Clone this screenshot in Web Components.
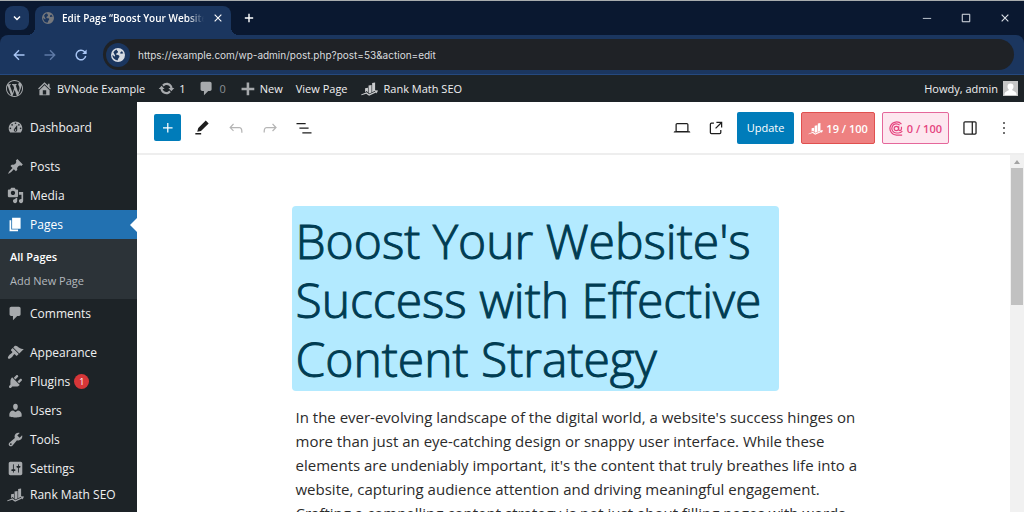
<!DOCTYPE html>
<html lang="en">
<head>
<meta charset="utf-8">
<meta name="viewport" content="width=device-width, initial-scale=1">
<title>Edit Page "Boost Your Website's Success"</title>
<style>
  html, body { height: 100%; }
  body {
    margin: 0;
    overflow: hidden;
    font-family: "Open Sans", "Noto Sans", sans-serif;
    font-size: 12px;
    color: #1e1e1e;
  }
</style>
</head>
<body>
<edit-page-app></edit-page-app>

<script>
const ICONS = {
  // 20px admin icons
  wordpress: ['0 0 20 20', '<path d="M20 10c0-5.51-4.49-10-10-10C4.48 0 0 4.49 0 10c0 5.52 4.48 10 10 10 5.51 0 10-4.48 10-10zM7.78 15.37L4.37 6.22c.55-.02 1.17-.08 1.17-.08.5-.06.44-1.13-.06-1.11 0 0-1.45.11-2.37.11-.18 0-.37 0-.58-.01C4.12 2.69 6.87 1.11 10 1.11c2.33 0 4.45.87 6.05 2.34-.68-.11-1.65.39-1.65 1.58 0 .74.45 1.36.9 2.1.35.61.55 1.36.55 2.46 0 1.49-1.4 5-1.4 5l-3.03-8.37c.54-.02.82-.17.82-.17.5-.05.44-1.25-.06-1.22 0 0-1.44.12-2.38.12-.87 0-2.33-.12-2.33-.12-.5-.03-.56 1.2-.06 1.22l.92.08 1.26 3.41zM17.41 10c.24-.64.74-1.87.43-4.25.7 1.29 1.05 2.71 1.05 4.25 0 3.29-1.73 6.24-4.4 7.78.97-2.59 1.94-5.2 2.92-7.78zM6.1 18.09C3.12 16.65 1.11 13.53 1.11 10c0-1.3.23-2.48.72-3.59C3.25 10.3 4.67 14.2 6.1 18.09zm4.03-6.63l2.58 6.98c-.86.29-1.76.45-2.71.45-.79 0-1.57-.11-2.29-.33.81-2.38 1.62-4.74 2.42-7.1z"/>'],
  home: ['0 0 20 20', '<path d="M16 8.5l1.53 1.53-1.06 1.06L10 4.6l-6.47 6.49-1.06-1.06L10 2.5l4 4v-2h2v4zm-6-2.46l6 5.99V18H4v-5.97zM12 17v-5H8v5h4z"/>'],
  update: ['0 0 20 20', '<path d="M10.2 3.28c3.53 0 6.43 2.61 6.92 6h2.08l-3.5 4-3.5-4h2.32c-.45-1.97-2.21-3.45-4.32-3.45-1.45 0-2.73.71-3.54 1.78L4.95 5.66C6.23 4.2 8.11 3.28 10.2 3.28zm-.4 13.44c-3.52 0-6.43-2.61-6.92-6H.8l3.5-4c1.17 1.33 2.33 2.67 3.5 4H5.48c.45 1.97 2.21 3.45 4.32 3.45 1.45 0 2.73-.71 3.54-1.78l1.71 1.95c-1.28 1.46-3.15 2.38-5.25 2.38z"/>'],
  comments: ['0 0 20 20', '<path d="M5 2h9c1.1 0 2 .9 2 2v7c0 1.1-.9 2-2 2h-2l-5 5v-5H5c-1.1 0-2-.9-2-2V4c0-1.1.9-2 2-2z"/>'],
  plus: ['0 0 20 20', '<path d="M18 9v3h-6v6H9v-6H3V9h6V3h3v6h6z"/>'],
  dashboard: ['0 0 20 20', '<path fill-rule="evenodd" d="M3.76 16h12.48c1.1-1.37 1.76-3.11 1.76-5 0-4.42-3.58-8-8-8s-8 3.58-8 8c0 1.89.66 3.63 1.76 5zM10 4c.55 0 1 .45 1 1s-.45 1-1 1-1-.45-1-1 .45-1 1-1zM6 6c.55 0 1 .45 1 1s-.45 1-1 1-1-.45-1-1 .45-1 1-1zm8 0c.55 0 1 .45 1 1s-.45 1-1 1-1-.45-1-1 .45-1 1-1zm-5.37 5.55L12 7v6c0 1.1-.9 2-2 2s-2-.9-2-2c0-.57.24-1.08.63-1.45zM4 10c.55 0 1 .45 1 1s-.45 1-1 1-1-.45-1-1 .45-1 1-1zm12 0c.55 0 1 .45 1 1s-.45 1-1 1-1-.45-1-1 .45-1 1-1zm-5 3c0-.55-.45-1-1-1s-1 .45-1 1 .45 1 1 1 1-.45 1-1z"/>'],
  pin: ['0 0 20 20', '<path d="M10.44 3.02l1.82-1.82 6.36 6.35-1.83 1.82c-1.05-.68-2.48-.57-3.41.36l-.75.75c-.92.93-1.04 2.35-.35 3.41l-1.83 1.82-2.41-2.41-2.8 2.79c-.42.42-3.38 2.71-3.8 2.29s1.86-3.39 2.28-3.81l2.79-2.79L4.1 9.36l1.83-1.82c1.05.69 2.48.57 3.4-.36l.75-.75c.93-.92 1.05-2.35.36-3.41z"/>'],
  media: ['0 0 20 20', '<path fill-rule="evenodd" d="M13 11V4c0-.55-.45-1-1-1h-1.67L9 1H5L3.67 3H2c-.55 0-1 .45-1 1v7c0 .55.45 1 1 1h10c.55 0 1-.45 1-1zM7 4.5c1.38 0 2.5 1.12 2.5 2.5S8.38 9.5 7 9.5 4.5 8.38 4.5 7 5.62 4.5 7 4.5zM14 6h5v10.5c0 1.38-1.12 2.5-2.5 2.5S14 17.88 14 16.5s1.12-2.5 2.5-2.5c.17 0 .34.02.5.05V9h-3V6zm-4 8.05V13h2v3.5c0 1.38-1.12 2.5-2.5 2.5S7 17.88 7 16.5 8.12 14 9.5 14c.17 0 .34.02.5.05z"/>'],
  page: ['0 0 20 20', '<path d="M6 15V2h10v13H6zm-1 1h8v2H3V5h2v11z"/>'],
  appearance: ['0 0 20 20', '<path d="M14.48 11.06L7.41 3.99l1.5-1.5c.5-.56 2.3-.47 3.51.32 1.21.8 1.43 1.28 2.91 2.1 1.18.64 2.45 1.26 4.45.85zm-.71.71L6.7 4.7 4.93 6.47c-.39.39-.39 1.02 0 1.41l1.06 1.06c.39.39.39 1.03 0 1.42-.6.6-1.43 1.11-2.21 1.69-.35.26-.7.53-1.01.84C1.43 14.23.4 16.08 1.4 17.07c.99 1 2.84-.03 4.18-1.36.31-.31.58-.66.85-1.02.57-.78 1.08-1.61 1.69-2.21.39-.39 1.02-.39 1.41 0l1.06 1.06c.39.39 1.02.39 1.41 0z"/>'],
  plugins: ['0 0 20 20', '<path d="M13.11 4.36L9.87 7.6 8 5.73l3.24-3.24c.35-.34 1.05-.2 1.56.32.52.51.66 1.21.31 1.55zm-8 1.77l.91-1.12 9.01 9.01-1.19.84c-.71.71-2.63 1.16-3.82 1.16H6.14L4.9 17.26c-.59.59-1.54.59-2.12 0-.59-.58-.59-1.53 0-2.12l1.24-1.24v-3.88c0-1.13.4-3.19 1.09-3.89zm7.26 3.97l3.24-3.24c.34-.35 1.04-.21 1.55.31.52.51.66 1.21.31 1.55l-3.24 3.25z"/>'],
  users: ['0 0 20 20', '<path d="M10 9.25c-2.27 0-2.73-3.44-2.73-3.44C7 4.02 7.82 2 9.97 2c2.16 0 2.98 2.02 2.71 3.81 0 0-.41 3.44-2.68 3.44zm0 2.57L12.72 10c2.39 0 4.52 2.33 4.52 4.53v2.49s-3.65 1.13-7.24 1.13c-3.65 0-7.24-1.13-7.24-1.13v-2.49c0-2.25 1.94-4.48 4.47-4.48z"/>'],
  tools: ['0 0 20 20', '<path fill-rule="evenodd" d="M16.68 9.77c-1.34 1.34-3.3 1.67-4.95.99l-5.41 6.52c-.99.99-2.59.99-3.58 0s-.99-2.59 0-3.57l6.52-5.42c-.68-1.65-.35-3.61.99-4.95 1.28-1.28 3.12-1.62 4.72-1.06l-2.89 2.89 2.82 2.82 2.86-2.87c.53 1.58.18 3.39-1.08 4.65zM3.81 16.21c.4.39 1.04.39 1.43 0 .4-.4.4-1.04 0-1.43-.39-.4-1.03-.4-1.43 0-.39.39-.39 1.03 0 1.43z"/>'],
  settings: ['0 0 20 20', '<path fill-rule="evenodd" d="M18 16V4c0-1.1-.9-2-2-2H4c-1.1 0-2 .9-2 2v12c0 1.1.9 2 2 2h12c1.1 0 2-.9 2-2zM8 11h1c.55 0 1 .45 1 1s-.45 1-1 1H8v1.5c0 .28-.22.5-.5.5s-.5-.22-.5-.5V13H6c-.55 0-1-.45-1-1s.45-1 1-1h1V5.5c0-.28.22-.5.5-.5s.5.22.5.5V11zm5-2h-1c-.55 0-1-.45-1-1s.45-1 1-1h1V5.5c0-.28.22-.5.5-.5s.5.22.5.5V7h1c.55 0 1 .45 1 1s-.45 1-1 1h-1v5.5c0 .28-.22.5-.5.5s-.5-.22-.5-.5V9z"/>'],
  rank: ['0 0 20 20', '<path d="M4.8 9.6l3.4-.6v5.6L6.6 13l-1.8 1.4zM8.9 6.4l3.5-.6v9L10 15.8l-1.1-.8zM13.1 3.4l3.5-.6v9.8l-3.500 1.900z"/><path d="M.2 17.200l6.300-2.900 3.200 2.400 7.100-3.300-.6-1.200 3.800.2-1.600 3.500-.7-1.200-8.200 3.700-3.400-2.300-5.600 1.700z"/>'],
  // 24px editor icons
  insert: ['0 0 24 24', '<path d="M11 12.5V17.5H12.5V12.5H17.5V11H12.5V6H11V11H6V12.5H11Z"/>'],
  pencil: ['0 0 24 24', '<path d="m20 6.5-3.5-3.5-9 9-1.200 4.500 4.500-1L20 6.500ZM11 18H4v1.800h7V18Z"/>'],
  undo: ['0 0 24 24', '<path d="M18.3 11.7c-.6-.6-1.4-.9-2.3-.9H6.7l2.9-3.3-1.1-1-4.5 5L8.5 16l1-1-2.7-2.7H16c.5 0 .9.2 1.3.5 1 1 1 3.4 1 4.5v.3h1.5v-.2c0-1.5 0-4.3-1.5-5.7z"/>'],
  redo: ['0 0 24 24', '<path d="M15.6 6.5l-1.1 1 2.9 3.3H8c-.9 0-1.7.3-2.3.9-1.4 1.5-1.4 4.2-1.4 5.6v.2h1.5v-.3c0-1.1 0-3.5 1-4.5.3-.3.7-.5 1.3-.5h9.2L14.5 15l1.1 1.1 4.6-4.6-4.6-5z"/>'],
  outline: ['0 0 24 24', '<path d="M3 6h11v1.5H3V6Zm3.500 5.500h11V13h-11v-1.500ZM21 17H10v1.500h11V17Z"/>'],
  laptop: ['0 0 24 24', '<path fill-rule="evenodd" d="M20.5 16h-.7V8c0-1.1-.9-2-2-2H6.2c-1.1 0-2 .9-2 2v8h-.7c-.8 0-1.5.7-1.5 1.5h20c0-.8-.7-1.5-1.5-1.5zM5.7 8c0-.3.2-.5.5-.5h11.6c.3 0 .5.2.5.5v7.6H5.7V8z"/>'],
  external: ['0 0 24 24', '<path d="M19.5 4.5h-7V6h4.44l-5.97 5.97 1.06 1.06L18 7.06v4.44h1.5v-7Zm-13 1a2 2 0 0 0-2 2v10a2 2 0 0 0 2 2h10a2 2 0 0 0 2-2v-3H17v3a.5.5 0 0 1-.5.5h-10a.5.5 0 0 1-.5-.5v-10a.5.5 0 0 1 .5-.5h3V5.5h-3Z"/>'],
  drawer: ['0 0 24 24', '<path fill-rule="evenodd" d="M18 4H6c-1.1 0-2 .9-2 2v12c0 1.1.9 2 2 2h12c1.1 0 2-.9 2-2V6c0-1.1-.9-2-2-2zm-4 14.5H6c-.3 0-.5-.2-.5-.5V6c0-.3.2-.5.5-.5h8v13zm4.5-.5c0 .3-.2.5-.5.5h-2.5v-13H18c.3 0 .5.2.5.5v12z"/>'],
  more: ['0 0 24 24', '<path d="M13 19h-2v-2h2v2zm0-6h-2v-2h2v2zm0-6h-2V5h2v2z"/>'],
  target: ['0 0 20 20', '<g fill="none" stroke="currentColor" stroke-width="1.6"><path d="M16.600 4.300A8.700 8.700 0 1 0 10 18.700h7.500"/><path d="M17.800 13.500A8.700 8.700 0 0 1 12.500 16H10A6.100 6.100 0 1 1 14.200 5.600"/><circle cx="9.800" cy="10" r="2.900"/><path d="M12.900 6.900v4.300c0 2.200 3.700 2.200 3.700-.8V7.600"/></g>'],
  // window controls
  chevron: ['0 0 12 12', '<path d="M3 4.5l3 3 3-3" fill="none" stroke="currentColor" stroke-width="1.5"/>'],
  close: ['0 0 12 12', '<path d="M2 2l8 8M10 2l-8 8" fill="none" stroke="currentColor" stroke-width="1.3"/>'],
  add: ['0 0 12 12', '<path d="M6 1v10M1 6h10" fill="none" stroke="currentColor" stroke-width="1.7"/>'],
  minimize: ['0 0 12 12', '<path d="M1 6.5h10" stroke="currentColor"/>'],
  maximize: ['0 0 12 12', '<path d="M1.5 1.5h9v9h-9z" fill="none" stroke="currentColor" stroke-width="1.2"/>'],
  back: ['0 0 12 12', '<path d="M11.5 6H1.5M6 1.3L1.3 6 6 10.7" fill="none" stroke="currentColor" stroke-width="1.4"/>'],
  forward: ['0 0 12 12', '<path d="M.5 6h10M6 1.3L10.7 6 6 10.7" fill="none" stroke="currentColor" stroke-width="1.4"/>'],
  reload: ['0 0 12 12', '<path d="M10.7 7A4.8 4.8 0 1 1 9.6 2.8L11 4.3" fill="none" stroke="currentColor" stroke-width="1.4"/><path d="M11.6.6v4.4H7.2z"/>'],
  globe: ['0 0 20 20', '<path fill-rule="evenodd" d="M10 0a10 10 0 1 0 0 20 10 10 0 0 0 0-20zM8.5 2.2c-.5 2 1.8 1.6 1.5 3.6-.3 1.7-2.6 1.4-2.6 3.2 0 1.4 2.2.9 3.6 1.5 1.5.7 1.2 2.5.1 3.4-.8.7-.9 2.4-1.9 3.9A8 8 0 0 1 2 9.6l2.6 2.3c1 .7 1.7-.3 1-1.4L3.4 6.2A8 8 0 0 1 8.5 2.2zM17.6 8.1c-1.5-.7-3 .6-4.1-.3-1-.9.6-2.9 2.2-3.2a8 8 0 0 1 1.9 3.5z"/>'],
  avatar: ['0 0 15 15', '<path fill="#c6c6c6" d="M0 0h15v15H0z"/><path fill="#fff" d="M7.5 2.5c2 0 3 1.3 3 3.1 0 1.5-.7 2.5-1.4 3.1.2 1.2 3.9 1.2 4.4 4.3v1H1.5v-1c.5-3.1 4.2-3.1 4.4-4.3-.7-.6-1.4-1.6-1.4-3.1 0-1.8 1-3.1 3-3.1z"/>']
};

class UiIcon extends HTMLElement {
  constructor() {
    super();
    this.attachShadow({ mode: 'open' });
  }

  connectedCallback() {
    const [box, shapes] = ICONS[this.getAttribute('name')];
    this.shadowRoot.innerHTML = /* html */ `
    <style>
      :host { display: block; flex: none; width: 17px; height: 17px; }
      svg { display: block; width: 100%; height: 100%; }
    </style>
    <svg viewBox="${box}" fill="currentColor" aria-hidden="true">${shapes}</svg>`;
  }
}

class BrowserTabs extends HTMLElement {
  constructor() {
    super();
    this.attachShadow({ mode: 'open' });
  }

  static get styles() {
    return /* css */`
    :host {
      display: flex;
      align-items: flex-end;
      height: 34px;
      border-top: 1px solid #a9adae;
      background: #0a1830;
      color: #fff;
    }

    button {
      display: grid;
      place-items: center;
      padding: 0;
      border: 0;
      background: none;
      color: inherit;
    }

    ui-icon { width: 12px; height: 12px; }

    .search {
      width: 24px;
      height: 24px;
      margin: 0 -2px 5px 5px;
      border-radius: 8px;
      background: #1b365f;
    }

    .tab {
      display: flex;
      align-items: flex-end;
    }

    .tab::before, .tab::after {
      content: "";
      width: 8px;
      height: 8px;
      background: radial-gradient(circle at 0 0, transparent 8px, #1b365f 8px);
    }

    .tab::after {
      background: radial-gradient(circle at 100% 0, transparent 8px, #1b365f 8px);
    }

    .tab-body {
      display: flex;
      align-items: center;
      width: 196px;
      height: 29px;
      box-sizing: border-box;
      padding: 2px 7px 8px;
      border-radius: 8px 8px 0 0;
      background: #1b365f;
    }

    .tab-body > ui-icon { color: #76787c; }

    .title {
      flex: 1;
      min-width: 0;
      margin: 0 8px;
      overflow: hidden;
      white-space: nowrap;
      font-size: 10px;
      font-weight: 600;
      mask-image: linear-gradient(90deg, #000 88%, transparent);
    }

    .tab-body button ui-icon { width: 10px; height: 10px; }
    .tab-body button { width: 12px; height: 16px; }
    .new { width: 20px; height: 34px; }
    .new ui-icon { width: 10px; height: 10px; }

    .controls {
      display: flex;
      margin-left: auto;
      color: #dfe3ea;
    }

    .controls button { width: 39px; height: 34px; }
    .controls ui-icon { width: 10px; height: 10px; }
  `;
  }

  connectedCallback() {
    this.shadowRoot.innerHTML = /* html */ `
    <style>${BrowserTabs.styles}</style>
    <button class="search" aria-label="Search tabs"><ui-icon name="chevron"></ui-icon></button>
    <div class="tab">
      <div class="tab-body">
        <ui-icon name="globe"></ui-icon>
        <span class="title"><slot></slot></span>
        <button aria-label="Close tab"><ui-icon name="close"></ui-icon></button>
      </div>
    </div>
    <button class="new" aria-label="New tab"><ui-icon name="add"></ui-icon></button>
    <div class="controls">
      <button aria-label="Minimize"><ui-icon name="minimize"></ui-icon></button>
      <button aria-label="Maximize"><ui-icon name="maximize"></ui-icon></button>
      <button aria-label="Close"><ui-icon name="close"></ui-icon></button>
    </div>`;
  }
}

class BrowserToolbar extends HTMLElement {
  constructor() {
    super();
    this.attachShadow({ mode: 'open' });
  }

  static get styles() {
    return /* css */`
    :host {
      display: block;
      background: #0a1830;
    }

    .bar {
      display: flex;
      align-items: center;
      height: 39px;
      padding: 0 10px;
      border-bottom: 1px solid #25497f;
      border-radius: 8px 8px 0 0;
      background: #1b365f;
    }

    button {
      display: grid;
      place-items: center;
      width: 31px;
      height: 30px;
      padding: 0;
      border: 0;
      background: none;
      color: #a9c6f5;
    }

    button ui-icon { width: 12px; height: 12px; }
    button:first-child { width: 18px; margin-right: 6px; }
    button[disabled] { color: #5f7aa6; }

    .address {
      display: flex;
      flex: 1;
      align-items: center;
      height: 31px;
      margin-left: 7px;
      border-radius: 16px;
      background: #1f2226;
    }

    .site {
      display: grid;
      place-items: center;
      width: 24px;
      height: 24px;
      margin: 0 8px 0 3px;
      border-radius: 50%;
      background: #1b365f;
      color: #d5dae2;
    }

    .site ui-icon { width: 14px; height: 14px; }

    input {
      flex: 1;
      min-width: 0;
      padding: 0;
      border: 0;
      outline: 0;
      background: none;
      color: #dadcdf;
      font: 10px/20px Inter, Roboto, sans-serif;
    }
  `;
  }

  connectedCallback() {
    this.shadowRoot.innerHTML = /* html */ `
    <style>${BrowserToolbar.styles}</style>
    <div class="bar">
      <button aria-label="Back"><ui-icon name="back"></ui-icon></button>
      <button aria-label="Forward" disabled><ui-icon name="forward"></ui-icon></button>
      <button aria-label="Reload"><ui-icon name="reload"></ui-icon></button>
      <div class="address">
        <span class="site"><ui-icon name="globe"></ui-icon></span>
        <input type="text" aria-label="Address" value="${this.getAttribute('url')}">
      </div>
    </div>`;
  }
}

class BarItem extends HTMLElement {
  constructor() {
    super();
    this.attachShadow({ mode: 'open' });
  }

  connectedCallback() {
    const icon = this.getAttribute('icon');
    const label = this.getAttribute('label');
    this.shadowRoot.innerHTML = /* html */ `
    <style>
      :host { display: block; }
      a {
        display: flex;
        align-items: center;
        gap: 4px;
        color: inherit;
        text-decoration: none;
        white-space: nowrap;
      }
      ui-icon { color: #a7aaad; }
      :host([icon="rank"]) a { gap: 6px; }
      :host([icon="rank"]) ui-icon { color: #c9cbcd; }
      :host([muted]) { color: #8b8f94; }
    </style>
    <a href="#"${label ? ` aria-label="${label}"` : ''}>${icon ? `<ui-icon name="${icon}"></ui-icon>` : ''}<slot></slot></a>`;
  }
}

class AdminBar extends HTMLElement {
  constructor() {
    super();
    this.attachShadow({ mode: 'open' });
  }

  connectedCallback() {
    this.shadowRoot.innerHTML = /* html */ `
    <style>
      :host {
        display: flex;
        align-items: center;
        gap: 13px;
        height: 27px;
        padding: 0 6px;
        background: #1d2327;
        color: #f0f0f1;
        font-size: 11px;
      }
      .account {
        display: flex;
        align-items: center;
        gap: 5px;
        margin-left: auto;
      }
      .account ui-icon { width: 15px; height: 15px; }
    </style>
    <slot></slot>
    <div class="account"><slot name="account"></slot><ui-icon name="avatar"></ui-icon></div>`;
  }
}

class MenuItem extends HTMLElement {
  constructor() {
    super();
    this.attachShadow({ mode: 'open' });
  }

  static get styles() {
    return /* css */`
    :host {
      display: block;
      color: #f0f0f1;
    }

    a {
      display: flex;
      align-items: center;
      gap: 6px;
      height: 29px;
      padding-left: 7px;
      color: inherit;
      text-decoration: none;
    }

    ui-icon { color: #a7aaad; }

    :host([gap]) { margin-top: 10px; }
    :host([short]) a { height: 22px; }

    :host([current]) a {
      background: #2271b1;
      color: #fff;
    }

    :host([current]) ui-icon { color: #fff; }

    /* notch that points at the content area */
    :host([current]) a::after {
      content: "";
      margin-left: auto;
      border: 7px solid transparent;
      border-left: 0;
      border-right-color: #fff;
    }

    .count {
      min-width: 15px;
      margin-left: -2px;
      border-radius: 8px;
      background: #d63638;
      color: #fff;
      font-size: 9px;
      line-height: 15px;
      text-align: center;
    }
  `;
  }

  connectedCallback() {
    const count = this.getAttribute('count');
    this.shadowRoot.innerHTML = /* html */ `
    <style>${MenuItem.styles}</style>
    <a href="#"><ui-icon name="${this.getAttribute('icon')}"></ui-icon><slot></slot>${count ? `<span class="count">${count}</span>` : ''}</a>
    <slot name="submenu"></slot>`;
  }
}

class SubMenu extends HTMLElement {
  constructor() {
    super();
    this.attachShadow({ mode: 'open' });
  }

  connectedCallback() {
    this.shadowRoot.innerHTML = /* html */ `
    <style>
      :host {
        display: block;
        padding: 6px 10px;
        background: #2c3338;
        font-size: 11px;
        line-height: 24px;
      }
      ::slotted(a) {
        display: block;
        color: #b4b9be;
        text-decoration: none;
      }
      ::slotted(a[aria-current]) {
        color: #fff;
        font-weight: 600;
      }
    </style>
    <slot></slot>`;
  }
}

class AdminMenu extends HTMLElement {
  constructor() {
    super();
    this.attachShadow({ mode: 'open' });
  }

  connectedCallback() {
    this.shadowRoot.innerHTML = /* html */ `
    <style>
      :host {
        display: block;
        box-sizing: border-box;
        padding-top: 11px;
        overflow: hidden;
        background: #1d2327;
      }
    </style>
    <nav aria-label="Main menu"><slot></slot></nav>`;
  }
}

class EditorHeader extends HTMLElement {
  constructor() {
    super();
    this.attachShadow({ mode: 'open' });
  }

  static get styles() {
    return /* css */`
    :host {
      display: flex;
      align-items: center;
      justify-content: space-between;
      height: 51px;
      padding: 0 7px 0 17px;
      border-bottom: 2px solid #eee;
      background: #fff;
    }

    .group {
      display: flex;
      align-items: center;
      gap: 7px;
    }

    button {
      display: flex;
      align-items: center;
      justify-content: center;
      gap: 3px;
      width: 27px;
      height: 27px;
      padding: 0;
      border: 0;
      border-radius: 2px;
      background: none;
      color: #1e1e1e;
      font: inherit;
      font-size: 11px;
    }

    button ui-icon { width: 20px; height: 20px; }
    button:disabled { color: #b5b5b5; }

    .insert, .update {
      background: #007cba;
      color: #fff;
    }

    .update, .score {
      width: auto;
      height: 32px;
    }

    .update { padding: 0 10px; }

    .score {
      padding: 2px 6px 0;
      border: 1px solid #e0504f;
      background: #ee8181;
      color: #fff;
      font-weight: 600;
    }

    .score.ai {
      border-color: #e5679b;
      background: #fde7ef;
      color: #e5457f;
    }

    .score ui-icon { width: 15px; height: 15px; }
  `;
  }

  connectedCallback() {
    this.shadowRoot.innerHTML = /* html */ `
    <style>${EditorHeader.styles}</style>
    <div class="group">
      <button class="insert" aria-label="Add block"><ui-icon name="insert"></ui-icon></button>
      <button aria-label="Tools"><ui-icon name="pencil"></ui-icon></button>
      <button aria-label="Undo" disabled><ui-icon name="undo"></ui-icon></button>
      <button aria-label="Redo" disabled><ui-icon name="redo"></ui-icon></button>
      <button aria-label="Document overview"><ui-icon name="outline"></ui-icon></button>
    </div>
    <div class="group">
      <button aria-label="Preview"><ui-icon name="laptop"></ui-icon></button>
      <button aria-label="View page"><ui-icon name="external"></ui-icon></button>
      <button class="update">Update</button>
      <button class="score"><ui-icon name="rank"></ui-icon>19 / 100</button>
      <button class="score ai"><ui-icon name="target"></ui-icon>0 / 100</button>
      <button aria-label="Settings"><ui-icon name="drawer"></ui-icon></button>
      <button aria-label="Options"><ui-icon name="more"></ui-icon></button>
    </div>`;
  }
}

class EditorCanvas extends HTMLElement {
  constructor() {
    super();
    this.attachShadow({ mode: 'open' });
  }

  static get styles() {
    return /* css */`
    :host {
      display: flex;
      min-height: 0;
      overflow: hidden;
      background: #fff;
    }

    .page {
      flex: 1;
      padding: 51px 16px 0 28px;
    }

    article {
      max-width: 568px;
      margin: 0 auto;
    }

    ::slotted(h1) {
      max-width: 479px;
      margin: 0 -4px;
      padding: 5px 4px 3px;
      border-radius: 4px;
      background: #b3eaff;
      color: #003c52;
      font-size: 48px;
      font-weight: 300;
      font-variant-ligatures: none;
      line-height: 59px;
      -webkit-text-stroke: 1px #003c52;
    }

    ::slotted(p) {
      margin: 14px 0 0;
      color: #2b2b2b;
      font-size: 15px;
      line-height: 24px;
    }

    .scrollbar {
      display: flex;
      flex-direction: column;
      gap: 4px;
      width: 12px;
      padding: 5px 1px 0;
      background: #f1f1f1;
    }

    .arrow {
      align-self: center;
      border: 3px solid transparent;
      border-top: 0;
      border-bottom: 4px solid #a3a3a3;
    }

    .thumb {
      height: 39%;
      background: #c1c1c1;
    }
  `;
  }

  connectedCallback() {
    this.shadowRoot.innerHTML = /* html */ `
    <style>${EditorCanvas.styles}</style>
    <div class="page"><article><slot></slot></article></div>
    <div class="scrollbar" aria-hidden="true">
      <span class="arrow"></span>
      <span class="thumb"></span>
    </div>`;
  }
}

class EditPageApp extends HTMLElement {
  constructor() {
    super();
    this.attachShadow({ mode: 'open' });
  }

  static get styles() {
    return /* css */`
    :host {
      display: grid;
      grid-template-rows: auto auto auto minmax(0, 1fr);
      height: 100vh;
    }

    .workspace {
      display: grid;
      grid-template-columns: 137px minmax(0, 1fr);
    }

    main {
      display: grid;
      grid-template-rows: auto minmax(0, 1fr);
      min-height: 0;
    }
  `;
  }

  connectedCallback() {
    this.shadowRoot.innerHTML = /* html */ `
    <style>${EditPageApp.styles}</style>
    <browser-tabs>Edit Page “Boost Your Website's</browser-tabs>
    <browser-toolbar url="https://example.com/wp-admin/post.php?post=53&amp;action=edit"></browser-toolbar>
    <admin-bar>
      <bar-item icon="wordpress" label="About WordPress"></bar-item>
      <bar-item icon="home">BVNode Example</bar-item>
      <bar-item icon="update">1</bar-item>
      <bar-item icon="comments" muted>0</bar-item>
      <bar-item icon="plus">New</bar-item>
      <bar-item>View Page</bar-item>
      <bar-item icon="rank">Rank Math SEO</bar-item>
      <bar-item slot="account">Howdy, admin</bar-item>
    </admin-bar>
    <div class="workspace">
      <admin-menu>
        <menu-item icon="dashboard">Dashboard</menu-item>
        <menu-item icon="pin" gap>Posts</menu-item>
        <menu-item icon="media">Media</menu-item>
        <menu-item icon="page" current>Pages
          <sub-menu slot="submenu">
            <a href="#" aria-current="page">All Pages</a>
            <a href="#">Add New Page</a>
          </sub-menu>
        </menu-item>
        <menu-item icon="comments">Comments</menu-item>
        <menu-item icon="appearance" gap>Appearance</menu-item>
        <menu-item icon="plugins" count="1">Plugins</menu-item>
        <menu-item icon="users">Users</menu-item>
        <menu-item icon="tools">Tools</menu-item>
        <menu-item icon="settings">Settings</menu-item>
        <menu-item icon="rank" short>Rank Math SEO</menu-item>
      </admin-menu>
      <main>
        <editor-header></editor-header>
        <editor-canvas>
          <h1>Boost Your Website's Success with Effective Content Strategy</h1>
          <p>In the ever-evolving landscape of the digital world, a website's success hinges on more than just an eye-catching design or snappy user interface. While these elements are undeniably important, it's the content that truly breathes life into a website, capturing audience attention and driving meaningful engagement. Crafting a compelling content strategy is not just about filling pages with words</p>
        </editor-canvas>
      </main>
    </div>`;
  }
}

customElements.define('ui-icon', UiIcon);
customElements.define('browser-tabs', BrowserTabs);
customElements.define('browser-toolbar', BrowserToolbar);
customElements.define('bar-item', BarItem);
customElements.define('admin-bar', AdminBar);
customElements.define('menu-item', MenuItem);
customElements.define('sub-menu', SubMenu);
customElements.define('admin-menu', AdminMenu);
customElements.define('editor-header', EditorHeader);
customElements.define('editor-canvas', EditorCanvas);
customElements.define('edit-page-app', EditPageApp);
</script>
</body>
</html>
